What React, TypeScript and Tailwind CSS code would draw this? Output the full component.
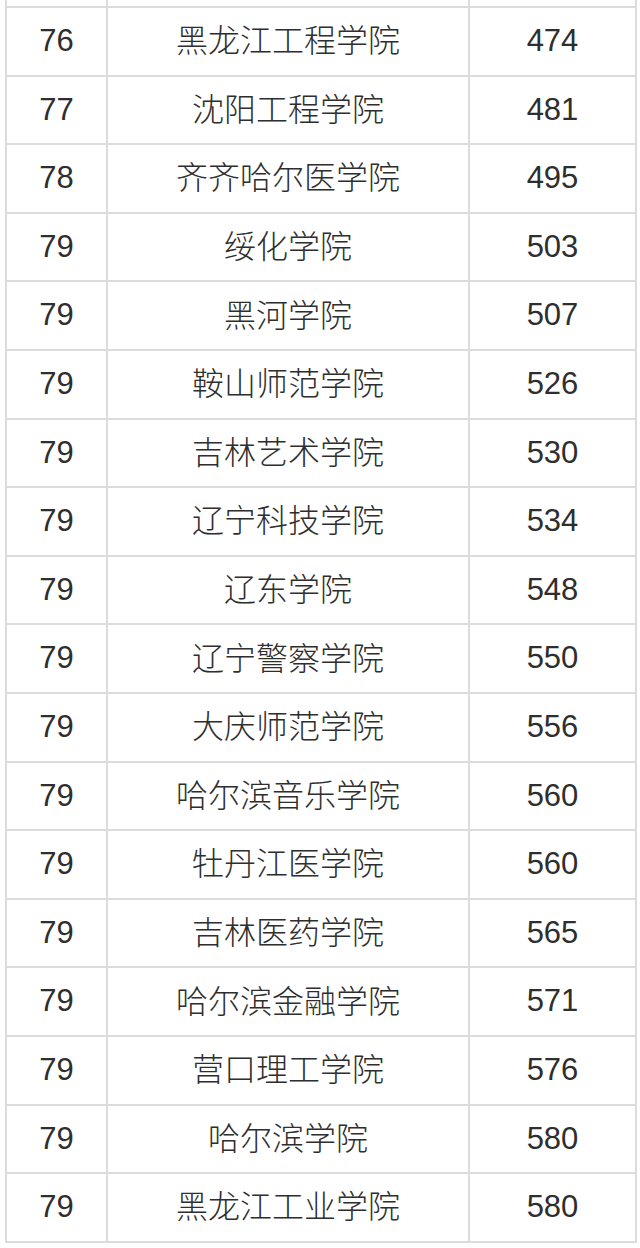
const rows: [string, string, string][] = [
  ['76', '黑龙江工程学院', '474'],
  ['77', '沈阳工程学院', '481'],
  ['78', '齐齐哈尔医学院', '495'],
  ['79', '绥化学院', '503'],
  ['79', '黑河学院', '507'],
  ['79', '鞍山师范学院', '526'],
  ['79', '吉林艺术学院', '530'],
  ['79', '辽宁科技学院', '534'],
  ['79', '辽东学院', '548'],
  ['79', '辽宁警察学院', '550'],
  ['79', '大庆师范学院', '556'],
  ['79', '哈尔滨音乐学院', '560'],
  ['79', '牡丹江医学院', '560'],
  ['79', '吉林医药学院', '565'],
  ['79', '哈尔滨金融学院', '571'],
  ['79', '营口理工学院', '576'],
  ['79', '哈尔滨学院', '580'],
  ['79', '黑龙江工业学院', '580'],
]

const cell = 'flex items-center justify-center border-r-2 border-[#dcdcdc]'

export default function App() {
  return (
    <div className="w-[640px] h-[1248px] bg-white font-['Liberation_Sans','Noto_Sans_CJK_SC',sans-serif] text-[31px] text-[#2e2e2e]">
      <div className="ml-[5px] w-[632px]">
        {/* tail of the previous row, cut off at the top */}
        <div className="grid grid-cols-[101px_362px_167px] h-[8px] border-l-2 border-b-2 border-[#dcdcdc]">
          <div className={cell} />
          <div className={cell} />
          <div className={cell} />
        </div>
        {rows.map(([rank, name, score], i) => (
          <div
            key={i}
            className="grid grid-cols-[101px_362px_167px] h-[68.6px] border-l-2 border-b-2 border-[#dcdcdc]"
          >
            <div className={cell}>{rank}</div>
            <div className={cell + ' text-[32px] font-light'}>{name}</div>
            <div className={cell}>{score}</div>
          </div>
        ))}
      </div>
    </div>
  )
}
